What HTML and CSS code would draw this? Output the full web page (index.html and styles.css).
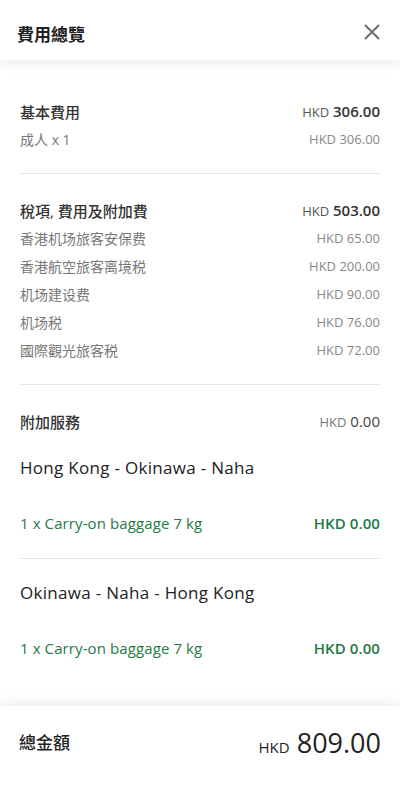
FILE: index.html
```html
<!DOCTYPE html>
<html>
<head>
    <title>費用總覽</title>
    <link rel="stylesheet" href="styles.css">
</head>
<body>
    <div class="header">
        <div class="header-title">費用總覽</div>
        <svg class="close" width="16" height="16" viewBox="0 0 16 16">
            <path d="M1 1 L15 15 M15 1 L1 15" stroke="#6b6b6b" stroke-width="1.8" fill="none"/>
        </svg>
    </div>

    <div class="content">
        <div class="section first">
            <div class="row head">
                <span>基本費用</span>
                <span class="amount"><small>HKD</small> 306.00</span>
            </div>
            <div class="row sub">
                <span>成人 x 1</span>
                <span class="amount">HKD 306.00</span>
            </div>
        </div>

        <div class="section">
            <div class="row head">
                <span>稅項, 費用及附加費</span>
                <span class="amount"><small>HKD</small> 503.00</span>
            </div>
            <div class="row sub"><span>香港机场旅客安保费</span><span class="amount">HKD 65.00</span></div>
            <div class="row sub"><span>香港航空旅客离境税</span><span class="amount">HKD 200.00</span></div>
            <div class="row sub"><span>机场建设费</span><span class="amount">HKD 90.00</span></div>
            <div class="row sub"><span>机场税</span><span class="amount">HKD 76.00</span></div>
            <div class="row sub"><span>國際觀光旅客税</span><span class="amount">HKD 72.00</span></div>
        </div>

        <div class="section last">
            <div class="row head">
                <span>附加服務</span>
                <span class="amount light"><small>HKD</small> 0.00</span>
            </div>
            <div class="leg">
                <div class="route">Hong Kong - Okinawa - Naha</div>
                <div class="row extra">
                    <span>1 x Carry-on baggage 7 kg</span>
                    <span class="amount">HKD 0.00</span>
                </div>
            </div>
            <div class="leg">
                <div class="route">Okinawa - Naha - Hong Kong</div>
                <div class="row extra">
                    <span>1 x Carry-on baggage 7 kg</span>
                    <span class="amount">HKD 0.00</span>
                </div>
            </div>
        </div>
    </div>

    <div class="footer">
        <div class="total-label">總金額</div>
        <div class="total"><small>HKD</small> 809.00</div>
    </div>
</body>
</html>
```

FILE: styles.css
```css
body {
    font-family: "Open Sans", "Noto Sans CJK TC", sans-serif;
    margin: 0;
    padding: 0;
    background-color: #fff;
    color: #333;
}

.header {
    height: 60px;
    padding: 0 20px 0 17px;
    display: flex;
    justify-content: space-between;
    align-items: center;
    background-color: #fff;
    box-shadow: 0 3px 12px rgba(0, 0, 0, 0.09);
}

.header-title {
    font-size: 17px;
    font-weight: 700;
    color: #222;
    padding-top: 6px;
}

.close {
    margin-top: 4px;
}

.content {
    padding: 0 20px;
}

.section {
    padding: 22px 0 20px;
    border-bottom: 1px solid #e6e6e6;
}

.section.first {
    padding-top: 37px;
}

.section.last {
    border-bottom: none;
    padding-bottom: 0;
}

.row {
    height: 28px;
    display: flex;
    justify-content: space-between;
    align-items: center;
}

.row.head {
    font-size: 15px;
    font-weight: 500;
    color: #333;
}

.row.head .amount {
    font-weight: 600;
}

.row.head .amount small {
    font-size: 13px;
    font-weight: 400;
    color: #555;
}

.row.head .amount.light {
    font-weight: 400;
    color: #444;
}

.row.head .amount.light small {
    color: #777;
}

.row.sub {
    font-size: 14px;
    color: #777;
}

.row.sub .amount {
    font-size: 13px;
    color: #888;
}

.leg {
    padding: 19px 0 21px;
}

.leg + .leg {
    border-top: 1px solid #e6e6e6;
    padding-top: 20px;
}

.route {
    height: 28px;
    line-height: 28px;
    font-size: 17px;
    letter-spacing: 0.3px;
    color: #222;
    margin-bottom: 27px;
}

.row.extra {
    font-size: 15px;
    letter-spacing: 0.1px;
    color: #1f7a45;
}

.row.extra .amount {
    font-weight: 600;
}

.footer {
    margin-top: 23px;
    height: 73px;
    padding: 0 19px;
    display: flex;
    justify-content: space-between;
    align-items: center;
    background-color: #fff;
    box-shadow: 0 0 14px rgba(0, 0, 0, 0.12);
}

.total-label {
    font-size: 17px;
    font-weight: 500;
    color: #222;
    padding-bottom: 3px;
}

.total {
    font-size: 27px;
    color: #222;
}

.total small {
    font-size: 15px;
}
```
